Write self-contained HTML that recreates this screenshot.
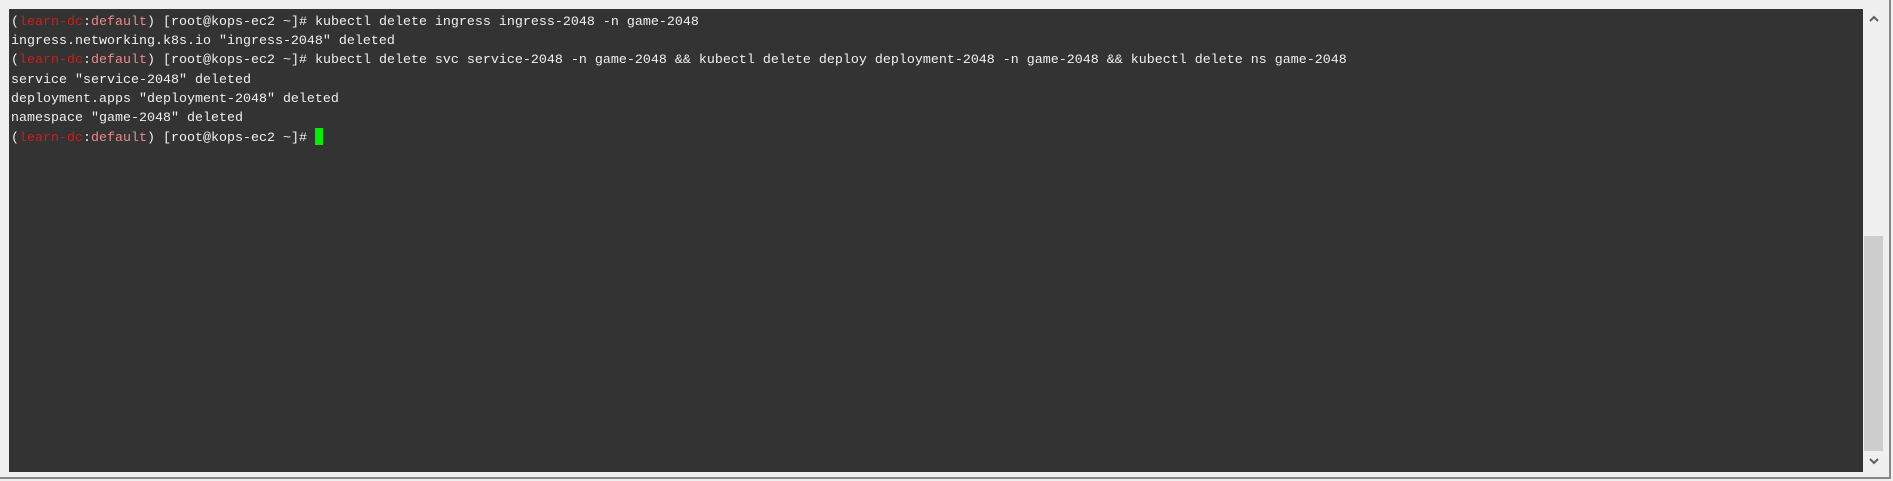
<!DOCTYPE html>
<html><head><style>
html,body{margin:0;padding:0;width:1893px;height:481px;overflow:hidden;background:#f0f0f0;}
.outer{position:absolute;left:0;top:0;width:1889px;height:477px;border-right:2px solid #888;border-bottom:2px solid #888;background:#f0f0f0;}
.term{position:absolute;left:9px;top:9px;width:1854px;height:463px;background:#333333;}
pre{margin:0;position:absolute;left:11px;top:13px;font-family:"Liberation Mono",monospace;font-size:13.33px;line-height:19.2px;color:#f0f0f0;}
.r{color:#c81e1e}.p{color:#ec8a8a}
.cur{display:inline-block;width:8px;height:17px;background:#00f000;vertical-align:-4px;}
.sb{position:absolute;left:1864px;top:9px;width:19px;height:463px;background:#f0f0f0;}
.thumb{position:absolute;left:1864px;top:236px;width:19px;height:215px;background:#cdcdcd;}
</style></head><body>
<div class="outer"></div>
<div class="term"></div>
<div class="sb"></div>
<div class="thumb"></div>
<svg style="position:absolute;left:1868px;top:14px" width="12" height="10"><path d="M2 7 L6 3 L10 7" stroke="#606060" stroke-width="2" fill="none"/></svg>
<svg style="position:absolute;left:1868px;top:456px" width="12" height="10"><path d="M2 3 L6 7 L10 3" stroke="#606060" stroke-width="2" fill="none"/></svg>
<pre>(<span class="r">learn-dc</span>:<span class="p">default</span>) [root@kops-ec2 ~]# kubectl delete ingress ingress-2048 -n game-2048
ingress.networking.k8s.io "ingress-2048" deleted
(<span class="r">learn-dc</span>:<span class="p">default</span>) [root@kops-ec2 ~]# kubectl delete svc service-2048 -n game-2048 &amp;&amp; kubectl delete deploy deployment-2048 -n game-2048 &amp;&amp; kubectl delete ns game-2048
service "service-2048" deleted
deployment.apps "deployment-2048" deleted
namespace "game-2048" deleted
(<span class="r">learn-dc</span>:<span class="p">default</span>) [root@kops-ec2 ~]# <span class="cur"></span></pre>
</body></html>
